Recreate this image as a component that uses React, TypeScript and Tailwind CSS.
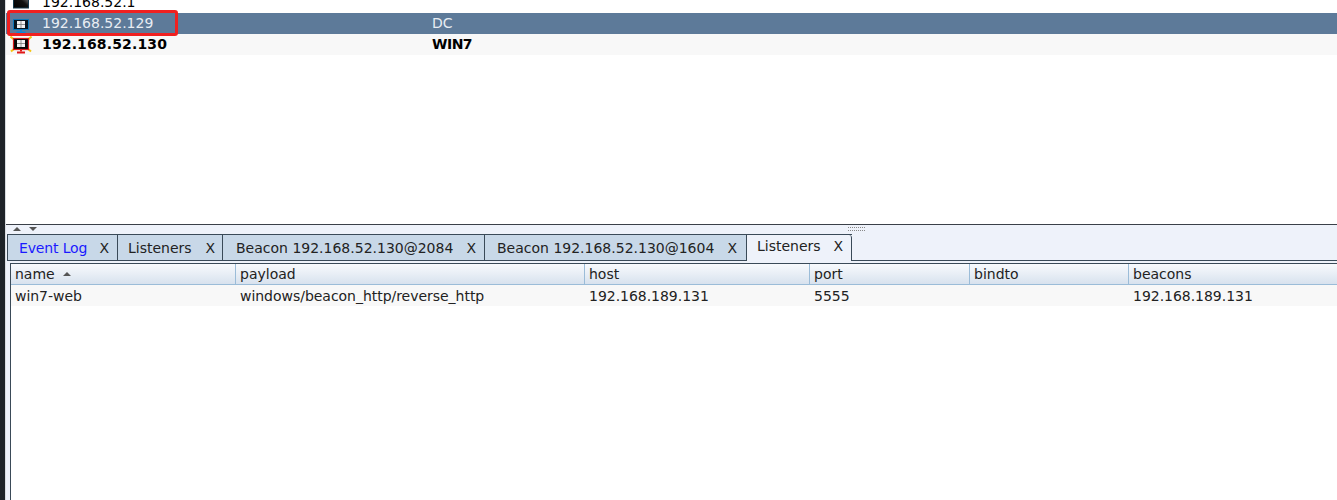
const font = "font-['DejaVu_Sans',sans-serif]";

function GatewayIcon() {
  return (
    <svg width="18" height="16" viewBox="0 0 18 16" className="shrink-0">
      <defs>
        <linearGradient id="gloss" x1="0" y1="1" x2="1" y2="0">
          <stop offset="0" stopColor="#000" />
          <stop offset="0.55" stopColor="#111" />
          <stop offset="0.75" stopColor="#4a4a4a" />
          <stop offset="1" stopColor="#0a0a0a" />
        </linearGradient>
      </defs>
      <rect x="1.5" y="0" width="15" height="13" fill="url(#gloss)" stroke="#16384a" strokeWidth="1" />
    </svg>
  );
}

function MonitorIcon() {
  return (
    <svg width="18" height="17" viewBox="0 0 18 17" className="mt-[3px] shrink-0">
      <rect x="1.5" y="2.5" width="15" height="10" fill="#06141f" stroke="#0b76b8" strokeWidth="1" />
      <rect x="5" y="4" width="8" height="7" fill="#f2f2f2" />
      <path d="M9 4V11M5 7.5H13" stroke="#777" strokeWidth="0.8" />
      <rect x="8" y="13" width="2" height="1.5" fill="#0b86d8" />
      <rect x="4.5" y="14.5" width="9" height="1.5" fill="#0b86d8" />
    </svg>
  );
}

function AlertMonitorIcon() {
  return (
    <svg width="22" height="18" viewBox="0 0 22 18" className="shrink-0">
      <g stroke="#f4c414" strokeWidth="2">
        <path d="M0.5 0.5L5 4.5" />
        <path d="M21.5 0.5L17 4.5" />
        <path d="M1 15.5L5 12" />
        <path d="M21 15.5L17 12" />
      </g>
      <rect x="3.5" y="2.5" width="15" height="11" fill="#070707" stroke="#d81818" strokeWidth="1.2" />
      <rect x="7" y="4" width="8" height="7" fill="#f2f2f2" />
      <path d="M11 4V11M7 7.5H15" stroke="#777" strokeWidth="0.8" />
      <rect x="10" y="13.5" width="2" height="2" fill="#e01818" />
      <rect x="7" y="15.5" width="8" height="2" fill="#e01818" />
    </svg>
  );
}

function HostRow({
  ip,
  name,
  selected,
  bold,
  striped,
  icon,
}: {
  ip: string;
  name?: string;
  selected?: boolean;
  bold?: boolean;
  striped?: boolean;
  icon: React.ReactNode;
}) {
  return (
    <div
      className={`flex h-[21px] items-center text-[14px] ${selected ? "bg-[#5d7a99] text-[#e8edf3]" : "text-black"} ${
        striped ? "bg-[#f8f8f8]" : ""
      } ${bold ? "font-bold" : ""}`}
    >
      <div className="flex w-[36px] justify-center pr-[6px]">{icon}</div>
      <div className={`w-[390px] ${bold ? "tracking-[0.14px]" : ""}`}>{ip}</div>
      <div className={bold ? "tracking-[-0.5px]" : ""}>{name}</div>
    </div>
  );
}

function Tab({
  label,
  blue,
  active,
  className,
}: {
  label: string;
  blue?: boolean;
  active?: boolean;
  className: string;
}) {
  return (
    <div
      className={`flex items-center justify-between border-[#3a4a58] text-[14px] text-[#222] ${className} ${
        active
          ? "-mb-px h-[26px] rounded-tr-[3px] border-r bg-[#eef2fa] pb-[4px]"
          : "h-[25px] border-r bg-[#c8d8e8] pt-px"
      }`}
    >
      <span className={blue ? "text-[#1a1aff]" : ""}>{label}</span>
      <span>X</span>
    </div>
  );
}

const columns = [
  { label: "name", width: "w-[225px]", value: "win7-web" },
  { label: "payload", width: "w-[349px]", value: "windows/beacon_http/reverse_http" },
  { label: "host", width: "w-[225px]", value: "192.168.189.131" },
  { label: "port", width: "w-[160px]", value: "5555" },
  { label: "bindto", width: "w-[159px]", value: "" },
  { label: "beacons", width: "flex-1", value: "192.168.189.131" },
];

export default function App() {
  return (
    <div className={`flex h-[500px] w-[1337px] overflow-hidden bg-white ${font}`}>
      <div className="flex w-[6px] shrink-0">
        <div className="w-[5px] bg-[#1e2328]" />
        <div className="w-px bg-[#d8dce0]" />
      </div>
      <div className="flex min-w-0 flex-1 flex-col">
        <div className="relative h-[224px] overflow-hidden bg-white">
          <div className="-mt-[8px]">
            <HostRow ip="192.168.52.1" icon={<GatewayIcon />} />
            <HostRow ip="192.168.52.129" name="DC" selected icon={<MonitorIcon />} />
            <HostRow ip="192.168.52.130" name="WIN7" bold striped icon={<AlertMonitorIcon />} />
          </div>
          <div className="absolute left-[1px] top-[10px] h-[26px] w-[171px] rounded-[3px] border-[3px] border-[#f02020]" />
        </div>
        <div className="flex h-[11px] items-start justify-between border-t border-[#3a4048] bg-[#eef2fa]">
          <div className="flex gap-[8px] pl-[7px] pt-[2px]">
            <div className="h-0 w-0 border-x-[4px] border-b-[4px] border-x-transparent border-b-[#555]" />
            <div className="h-0 w-0 border-x-[4px] border-t-[4px] border-x-transparent border-t-[#555]" />
          </div>
        </div>
        <div className="flex flex-1 flex-col bg-[#eef2fa] pl-px">
          <div className="relative flex h-[26px] items-end border-b border-[#3a4a58]">
            <div className="flex items-end border-l border-t border-[#3a4a58]">
              <Tab label="Event Log" blue className="w-[110px] pl-[11px] pr-[8px] tracking-[-0.15px]" />
              <Tab label="Listeners" className="w-[105px] pl-[10px] pr-[7px]" />
              <Tab label="Beacon 192.168.52.130@2084" className="w-[262px] pl-[13px] pr-[8px]" />
              <Tab label="Beacon 192.168.52.130@1604" className="w-[262px] pl-[12px] pr-[9px]" />
              <Tab label="Listeners" active className="w-[105px] pl-[10px] pr-[8px]" />
            </div>
            <div className="absolute left-[841px] top-[-8px] h-[4px] w-[17px] border-y border-dotted border-[#888]" />
          </div>
          <div className="ml-[3px] mt-[2px] flex flex-1 flex-col border-l border-t border-[#3a4a58] bg-white">
            <div className="flex h-[21px] border-b border-[#9bbcd8] bg-gradient-to-b from-[#f8fafd] to-[#d8e2ee] text-[14px] text-[#222]">
              {columns.map((c, i) => (
                <div key={c.label} className={`flex items-center pl-[4px] ${c.width} ${i < 5 ? "border-r border-[#9bbcd8]" : ""}`}>
                  {c.label}
                  {i === 0 && (
                    <span className="ml-[8px] h-0 w-0 border-x-[4px] border-b-[4px] border-x-transparent border-b-[#555]" />
                  )}
                </div>
              ))}
            </div>
            <div className="flex h-[21px] items-center bg-[#f8f8f8] pt-px text-[14px] tracking-[-0.03px] text-[#222]">
              {columns.map((c) => (
                <div key={c.label} className={`pl-[4px] ${c.width}`}>
                  {c.value}
                </div>
              ))}
            </div>
          </div>
        </div>
      </div>
    </div>
  );
}
